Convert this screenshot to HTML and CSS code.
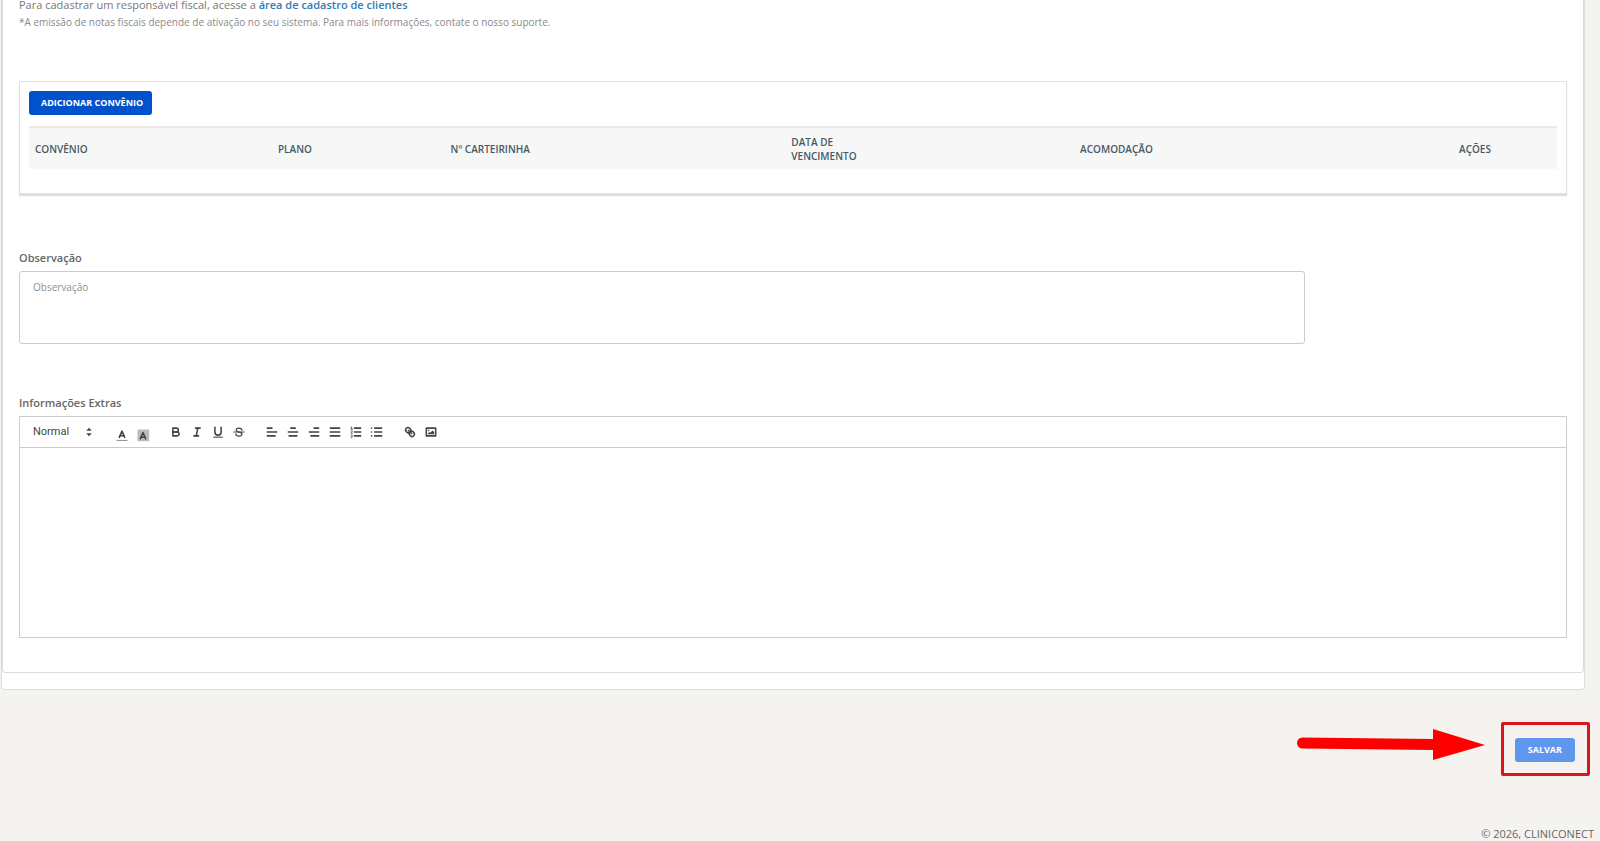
FILE: index.html
```html
<!DOCTYPE html>
<html lang="pt-BR">
<head>
<meta charset="utf-8">
<title>Cadastro de paciente</title>
<link rel="stylesheet" href="styles.css">
</head>
<body>
<main class="panel">
  <form class="card" id="patient-form">
    <p class="fiscal">Para cadastrar um responsável fiscal, acesse a <a href="#clientes">área de cadastro de clientes</a></p>
    <p class="fiscal-note">*A emissão de notas fiscais depende de ativação no seu sistema. Para mais informações, contate o nosso suporte.</p>

    <section class="plans">
      <button type="button" class="btn btn-add">ADICIONAR CONVÊNIO</button>
      <table class="plans-table">
        <colgroup>
          <col class="col-plan"><col class="col-type"><col class="col-number"><col class="col-date"><col class="col-room"><col>
        </colgroup>
        <thead>
          <tr>
            <th scope="col">CONVÊNIO</th>
            <th scope="col">PLANO</th>
            <th scope="col">Nº CARTEIRINHA</th>
            <th scope="col">DATA DE<br>VENCIMENTO</th>
            <th scope="col">ACOMODAÇÃO</th>
            <th scope="col">AÇÕES</th>
          </tr>
        </thead>
      </table>
    </section>

    <div class="field">
      <label for="obs">Observação</label>
      <textarea id="obs" class="notes" placeholder="Observação"></textarea>
    </div>

    <div class="field">
      <label for="extra">Informações Extras</label>
      <div class="editor">
        <div class="toolbar" role="toolbar" aria-label="Formatação">
          <div class="picker">
            <select aria-label="Estilo do texto"><option>Normal</option></select>
            <svg viewBox="0 0 18 18"><polygon class="fill" points="5.500 10.500 9 14.500 12.500 10.500"/><polygon class="fill" points="5.500 7.500 9 3.500 12.500 7.500"/></svg>
          </div>
          <div class="group colors">
            <button type="button" aria-label="Cor do texto"><svg viewBox="0 0 18 18"><line class="faint" x1="2" x2="16" y1="16" y2="16"/><polyline class="line" points="5.5 12 9 4 12.5 12"/><line class="line" x1="6.5" x2="11.5" y1="10" y2="10"/></svg></button>
            <button type="button" aria-label="Cor de fundo"><svg viewBox="0 0 18 18"><rect class="shade" x="2" y="2" width="15" height="15"/><polyline class="line" points="5.5 14 9 6 12.5 14"/><line class="line" x1="6.5" x2="11.5" y1="12" y2="12"/></svg></button>
          </div>
          <div class="group">
            <button type="button" aria-label="Negrito"><svg viewBox="0 0 18 18"><path class="line" d="M5,4H9.5A2.5,2.5,0,0,1,12,6.5v0A2.5,2.5,0,0,1,9.5,9H5V4Z"/><path class="line" d="M5,9h5.5A2.5,2.5,0,0,1,13,11.5v0A2.5,2.5,0,0,1,10.5,14H5V9Z"/></svg></button>
            <button type="button" aria-label="Itálico"><svg viewBox="0 0 18 18"><line class="line" x1="7" x2="13" y1="4" y2="4"/><line class="line" x1="5" x2="11" y1="14" y2="14"/><line class="line" x1="8" x2="10" y1="14" y2="4"/></svg></button>
            <button type="button" aria-label="Sublinhado"><svg viewBox="0 0 18 18"><path class="line" d="M5,3V9a4,4,0,0,0,8,0V3"/><rect class="fill" x="3" y="15" width="12" height="1.4"/></svg></button>
            <button type="button" aria-label="Tachado"><svg viewBox="0 0 18 18"><line class="line thin" x1="2.5" x2="15.5" y1="9" y2="9"/><path class="line thin" d="M12.8,6.5C12.3,3.3 5.4,3 5.4,6.5C5.4,8.5 8,8.8 9.5,9.2C12,9.8 13,10.500 12.8,12C12.200,15.300 5.200,15 5,11.500"/></svg></button>
          </div>
          <div class="group">
            <button type="button" aria-label="Alinhar à esquerda"><svg viewBox="0 0 18 18"><path class="line" d="M3,9H15M3,14H13M3,4H9"/></svg></button>
            <button type="button" aria-label="Centralizar"><svg viewBox="0 0 18 18"><path class="line" d="M3,9H15M4,14H14M6,4H12"/></svg></button>
            <button type="button" aria-label="Alinhar à direita"><svg viewBox="0 0 18 18"><path class="line" d="M3,9H15M5,14H15M9,4H15"/></svg></button>
            <button type="button" aria-label="Justificar"><svg viewBox="0 0 18 18"><path class="line" d="M3,9H15M3,14H15M3,4H15"/></svg></button>
            <button type="button" aria-label="Lista numerada"><svg viewBox="0 0 18 18"><path class="line" d="M7,4H15M7,9H15M7,14H15"/><path class="line hair" d="M2.500,5.500H4.500M3.500,5.500V2.500L2.500,3M4.500,10.500H2.500C2.500,9.500 4.500,9.300 4.300,8.200C4.100,7.300 2.800,7.400 2.500,8M2.500,12.800C4.800,12.300 4.800,14.500 3.300,14.500C4.900,14.500 4.800,16.800 2.500,16.200"/></svg></button>
            <button type="button" aria-label="Lista com marcadores"><svg viewBox="0 0 18 18"><path class="line" d="M6,4H15M6,9H15M6,14H15"/><path class="line" d="M2,4H2.100M2,9H2.100M2,14H2.100"/></svg></button>
          </div>
          <div class="group">
            <button type="button" aria-label="Link"><svg viewBox="0 0 18 18"><line class="line" x1="7" x2="11" y1="7" y2="11"/><path class="line" d="M8.900,4.577a3.476,3.476,0,0,1,.36,4.679A3.476,3.476,0,0,1,4.577,8.900C3.185,7.500,2.035,6.400,4.217,4.217S7.500,3.185,8.900,4.577Z"/><path class="line" d="M13.423,9.100a3.476,3.476,0,0,0-4.679-.36,3.476,3.476,0,0,0,.36,4.679c1.392,1.392,2.500,2.542,4.679.36S14.815,10.500,13.423,9.100Z"/></svg></button>
            <button type="button" aria-label="Imagem"><svg viewBox="0 0 18 18"><rect class="line" x="3" y="4" width="12" height="10"/><circle class="fill" cx="6" cy="7" r="1"/><polyline class="fill" points="5 12 5 11 7 9 8 10 11 7 13 9 13 12 5 12"/></svg></button>
          </div>
        </div>
        <textarea id="extra" class="editor-area"></textarea>
      </div>
    </div>
  </form>
</main>

<div class="actions">
  <svg class="arrow" viewBox="0 0 188 32"><path d="M5.500,9.500L136,11V1L188,17L136,32V22L5.500,20.500A5.500,5.500 0 0 1 5.500,9.500Z"/></svg>
  <div class="save">
    <button type="submit" form="patient-form" class="btn btn-save">SALVAR</button>
  </div>
</div>
<footer class="footer">© 2026, CLINICONECT</footer>
</body>
</html>
```
FILE: styles.css
```css
* { box-sizing: border-box; }

body {
  margin: 0;
  height: 100vh;
  overflow: hidden;
  background: #f4f3ef;
  color: #666;
  font: 11px/16px "Open Sans", "Noto Sans", sans-serif;
}

.panel {
  margin: 0 15px 0 1px;
  padding-bottom: 16px;
  background: #fff;
  border: 1px solid #dcdcdc;
  border-top: 0;
  border-radius: 0 0 4px 4px;
}

.card {
  padding: 0 16px 34px;
  border: 1px solid #dcdcdc;
  border-top: 0;
  border-radius: 0 0 4px 4px;
}

p { margin: 0; }

.fiscal { line-height: 10px; color: #777; }
.fiscal a { color: #337ab7; font-weight: 600; text-decoration: none; }
.fiscal-note { margin-top: 5px; font-size: 10px; line-height: 14px; color: #8a8a8a; }

.plans {
  margin-top: 52px;
  padding: 9px 9px 24px;
  border: 1px solid #e2e2e2;
  box-shadow: 0 2px 1px #dedede;
}

.btn {
  display: block;
  height: 24px;
  border: 0;
  border-radius: 3px;
  color: #fff;
  font: 700 9px/14px "Open Sans", sans-serif;
}
.btn-add { padding: 0 9px 0 12px; background: #0052cc; }
.btn-save { padding: 0 13px; background: #5f96ee; }

.plans-table {
  width: 100%;
  margin-top: 11px;
  border-top: 2px solid #e9e9e9;
  border-collapse: separate;
  border-spacing: 0;
  table-layout: fixed;
  background: #f7f7f7;
}
.plans-table th {
  padding: 7px 6px 6px;
  color: #455a64;
  font-size: 10px;
  font-weight: 600;
  line-height: 14px;
  text-align: left;
}
.col-plan { width: 15.9%; }
.col-type { width: 11.3%; }
.col-number { width: 22.3%; }
.col-date { width: 18.9%; }
.col-room { width: 24.8%; }

.field { margin-top: 51px; }
.plans + .field { margin-top: 56px; }
.field label { display: block; margin-bottom: 5px; font-weight: 600; }

.notes {
  display: block;
  width: 83.1%;
  height: 73px;
  padding: 8px 13px;
  border: 1px solid #ccc;
  border-radius: 3px;
  resize: none;
  font: 10px/14px "Open Sans", sans-serif;
}
.notes::placeholder { color: #8f8f8f; }

.editor { border: 1px solid #ccc; }

.toolbar {
  display: flex;
  align-items: center;
  gap: 19px;
  height: 31px;
  padding-left: 13px;
  border-bottom: 1px solid #ccc;
}
.toolbar svg { display: block; width: 14px; height: 14px; }
.toolbar button { padding: 0; border: 0; background: none; }
.group { display: flex; gap: 7px; }
.colors { padding-top: 5px; }

.picker { display: flex; align-items: center; width: 63px; }
.picker select {
  flex: 1;
  min-width: 0;
  padding: 0;
  border: 0;
  appearance: none;
  background: none;
  color: #444;
  font: 400 11px/16px Roboto, sans-serif;
}

.line { fill: none; stroke: #444; stroke-width: 2; stroke-linecap: round; stroke-linejoin: round; }
.thin { stroke-width: 1.6; }
.hair { stroke-width: 1; }
.faint { stroke: #999; stroke-width: 1.4; }
.fill { fill: #444; }
.shade { fill: #bbb; }

.editor-area {
  display: block;
  width: 100%;
  height: 189px;
  padding: 12px 15px;
  border: 0;
  resize: none;
}

.actions {
  display: flex;
  justify-content: flex-end;
  align-items: center;
  gap: 16px;
  padding: 32px 10px 0 0;
}
.arrow { width: 188px; height: 32px; fill: #f00; margin-bottom: 10px; }
.save { padding: 13px 12px 11px 11px; border: 3px solid #d9161c; border-radius: 2px; }

.footer {
  margin-top: 52px;
  padding-right: 6px;
  line-height: 12px;
  text-align: right;
}
```
